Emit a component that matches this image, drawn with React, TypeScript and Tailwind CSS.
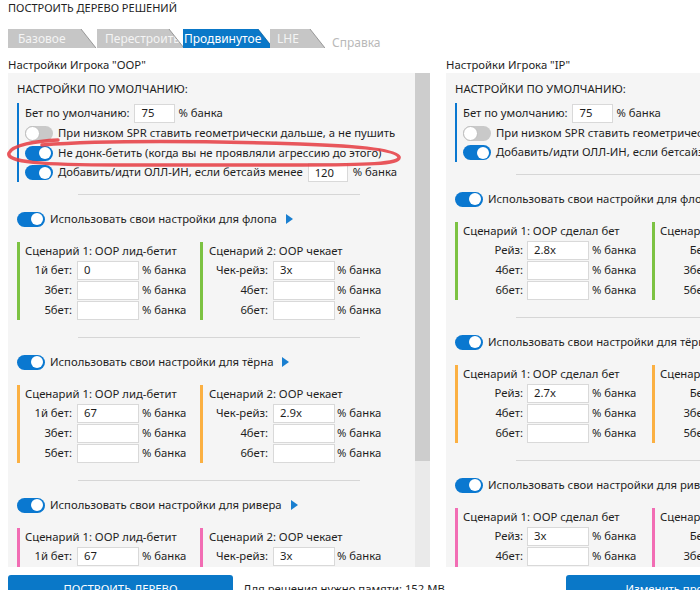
import React from 'react'

type Scn = { title: string; rows: [string, string][] }
type Section = { street: string; border: string; s1: Scn; s2: Scn }

type Layout = {
  c1: string
  l1: string
  i1: string
  p1: string
  l2: string
  i2: string
  p2: string
  h2: string
}

function Toggle({ on }: { on: boolean }) {
  if (on) {
    return (
      <span className="flex h-[15px] w-[28px] shrink-0 items-center justify-end rounded-full bg-[#0a78d0] pr-[2px]">
        <span className="h-[12px] w-[12px] rounded-full bg-white" />
      </span>
    )
  }
  return (
    <span className="flex h-[15px] w-[28px] shrink-0 items-center justify-start rounded-full bg-[#c9c9c9]">
      <span className="h-[15px] w-[15px] rounded-full border border-[#bdbdbd] bg-white" />
    </span>
  )
}

function Field({ value, w }: { value: string; w: string }) {
  return (
    <span className={`flex h-[19px] shrink-0 items-center border border-[#d9d9d9] bg-white pl-[6px] leading-none ${w}`}>
      {value}
    </span>
  )
}

function Arrow() {
  return (
    <svg width="7" height="10" viewBox="0 0 7 10" className="ml-[4px] shrink-0">
      <polygon points="0,0 7,5 0,10" fill="#1a7fd0" />
    </svg>
  )
}

function Tab({ label, active, w, pl, className = '' }: { label: string; active?: boolean; w: string; pl: string; className?: string }) {
  return (
    <div className={`relative h-[19px] shrink-0 ${w} ${className}`}>
      <div
        className={`flex h-full items-center [clip-path:polygon(0_0,calc(100%_-_15px)_0,100%_100%,0_100%)] ${pl} ${
          active ? 'bg-[#0a78c8] text-white' : 'bg-[#c6c6c6] text-[#f4f4f4]'
        }`}
      >
        {label}
      </div>
      <svg className="pointer-events-none absolute top-0 right-0" width="16" height="19" viewBox="0 0 16 19">
        <line x1="1" y1="0" x2="16" y2="19" stroke={active ? '#065a96' : '#7a7a7a'} strokeWidth="1" opacity="0.7" />
      </svg>
    </div>
  )
}

function Scenario({ s, w, border, lab, inp, pct, head }: { s: Scn; w: string; border: string; lab: string; inp: string; pct: string; head: string }) {
  return (
    <div className={`flex shrink-0 flex-col border-l-[3px] ${w} ${border}`}>
      <div className={`h-[18px] leading-[18px] whitespace-nowrap ${head}`}>{s.title}</div>
      {s.rows.map(([label, value]) => (
        <div key={label} className="flex h-5 items-center whitespace-nowrap">
          <span className={`shrink-0 text-right ${lab}`}>{label}</span>
          <span className={inp}>
            <Field value={value} w="w-[62px]" />
          </span>
          <span className={pct}>% банка</span>
        </div>
      ))}
    </div>
  )
}

function StreetBlock({ sec, first, lay }: { sec: Section; first: boolean; lay: Layout }) {
  return (
    <>
      <div className={`ml-[61px] h-px w-[282px] shrink-0 bg-[#d6d6d6] ${first ? 'mt-[12px]' : 'mt-[17px]'}`} />
      <div className="mt-[14px] flex h-5 shrink-0 items-center gap-[5px] whitespace-nowrap">
        <Toggle on />
        <span>Использовать свои настройки для {sec.street}</span>
        <Arrow />
      </div>
      <div className="mt-[13px] flex shrink-0">
        <Scenario s={sec.s1} w={lay.c1} border={sec.border} lab={lay.l1} inp={lay.i1} pct={lay.p1} head="pl-[5px]" />
        <Scenario s={sec.s2} w="w-[200px]" border={sec.border} lab={lay.l2} inp={lay.i2} pct={lay.p2} head={lay.h2} />
      </div>
    </>
  )
}

const green = 'border-[#7cc242]'
const orange = 'border-[#fbb042]'
const pink = 'border-[#f26db4]'

const oopSections: Section[] = [
  {
    street: 'флопа',
    border: green,
    s1: { title: 'Сценарий 1: OOP лид-бетит', rows: [['1й бет:', '0'], ['3бет:', ''], ['5бет:', '']] },
    s2: { title: 'Сценарий 2: OOP чекает', rows: [['Чек-рейз:', '3x'], ['4бет:', ''], ['6бет:', '']] },
  },
  {
    street: 'тёрна',
    border: orange,
    s1: { title: 'Сценарий 1: OOP лид-бетит', rows: [['1й бет:', '67'], ['3бет:', ''], ['5бет:', '']] },
    s2: { title: 'Сценарий 2: OOP чекает', rows: [['Чек-рейз:', '2.9x'], ['4бет:', ''], ['6бет:', '']] },
  },
  {
    street: 'ривера',
    border: pink,
    s1: { title: 'Сценарий 1: OOP лид-бетит', rows: [['1й бет:', '67'], ['3бет:', ''], ['5бет:', '']] },
    s2: { title: 'Сценарий 2: OOP чекает', rows: [['Чек-рейз:', '3x'], ['4бет:', ''], ['6бет:', '']] },
  },
]

const ipSections: Section[] = [
  {
    street: 'флопа',
    border: green,
    s1: { title: 'Сценарий 1: OOP сделал бет', rows: [['Рейз:', '2.8x'], ['4бет:', ''], ['6бет:', '']] },
    s2: { title: 'Сценарий 2: OOP чекает', rows: [['Бет:', '75'], ['3бет:', ''], ['5бет:', '']] },
  },
  {
    street: 'тёрна',
    border: orange,
    s1: { title: 'Сценарий 1: OOP сделал бет', rows: [['Рейз:', '2.7x'], ['4бет:', ''], ['6бет:', '']] },
    s2: { title: 'Сценарий 2: OOP чекает', rows: [['Бет:', '75'], ['3бет:', ''], ['5бет:', '']] },
  },
  {
    street: 'ривера',
    border: pink,
    s1: { title: 'Сценарий 1: OOP сделал бет', rows: [['Рейз:', '3x'], ['4бет:', ''], ['6бет:', '']] },
    s2: { title: 'Сценарий 2: OOP чекает', rows: [['Бет:', '75'], ['3бет:', ''], ['5бет:', '']] },
  },
]

const oopLayout: Layout = {
  c1: 'w-[183px]',
  l1: 'w-[52px]',
  i1: 'ml-[5px]',
  p1: 'ml-[3px]',
  l2: 'w-[65px]',
  i2: 'ml-[5px]',
  p2: 'ml-[2px]',
  h2: 'pl-[6px]',
}

const ipLayout: Layout = {
  c1: 'w-[197px]',
  l1: 'w-[65px]',
  i1: 'ml-[4px]',
  p1: 'ml-[3px]',
  l2: 'w-[56px]',
  i2: 'ml-[5px]',
  p2: 'ml-[3px]',
  h2: 'pl-[5px]',
}

function Panel({ ip }: { ip?: boolean }) {
  const sections = ip ? ipSections : oopSections
  const lay = ip ? ipLayout : oopLayout
  return (
    <div className={`flex h-[494px] shrink-0 flex-col overflow-hidden bg-[#f5f5f5] px-[9px] pt-2 whitespace-nowrap ${ip ? 'w-[440px]' : 'w-[407px]'}`}>
      <div className="h-4 shrink-0 leading-4">НАСТРОЙКИ ПО УМОЛЧАНИЮ:</div>
      <div className="mt-[6px] flex shrink-0 flex-col border-l-2 border-[#0a78d0] pl-[6px]">
        <div className="flex h-5 items-center">
          <span>Бет по умолчанию:</span>
          <span className="ml-[5px]">
            <Field value="75" w="w-[41px]" />
          </span>
          <span className="ml-[3px]">% банка</span>
        </div>
        <div className="flex h-5 items-center gap-[5px]">
          <Toggle on={false} />
          <span>При низком SPR ставить геометрически дальше, а не пушить</span>
        </div>
        {!ip && (
          <div className="flex h-5 items-center gap-[5px]">
            <Toggle on />
            <span>Не донк-бетить (когда вы не проявляли агрессию до этого)</span>
          </div>
        )}
        <div className="flex h-[19px] items-center gap-[5px]">
          <Toggle on />
          <span>Добавить/идти ОЛЛ-ИН, если бетсайз менее</span>
          <Field value="120" w="w-[40px]" />
          <span>% банка</span>
        </div>
      </div>
      {sections.map((sec, i) => (
        <StreetBlock key={sec.street} sec={sec} first={i === 0} lay={lay} />
      ))}
    </div>
  )
}

export default function App() {
  return (
    <div className="relative h-[590px] w-[700px] overflow-hidden bg-white font-['Noto_Sans',sans-serif] text-[11.3px] text-[#1e1e1e]">
      <div className="h-[29px] pl-2 text-[11px] leading-[15px]">ПОСТРОИТЬ ДЕРЕВО РЕШЕНИЙ</div>

      <div className="flex h-[19px] items-center pl-2 text-[12px]">
        <Tab label="Базовое" w="w-[88px]" pl="pl-[10px]" />
        <Tab label="Перестроить" w="w-[87px]" pl="pl-[8px]" className="ml-[1px]" />
        <Tab label="Продвинутое" active w="w-[90px]" pl="pl-[1px]" className="-ml-[1px]" />
        <Tab label="LHE" w="w-[55px]" pl="pl-[7px]" className="-ml-[3px]" />
        <span className="mt-[8px] ml-[7px] text-[#b9b9b9]">Справка</span>
      </div>

      <div className="flex">
        <div className="ml-2 flex w-[422px] shrink-0 flex-col">
          <div className="flex h-[25px] items-end leading-4">Настройки Игрока "OOP"</div>
          <div className="flex">
            <Panel />
            <div className="flex w-[15px] shrink-0 flex-col">
              <div className="h-[388px] bg-[#cdcdcd]" />
              <div className="flex-1 bg-[#eaeaea]" />
            </div>
          </div>
        </div>
        <div className="ml-4 flex shrink-0 flex-col">
          <div className="flex h-[25px] items-end leading-4">Настройки Игрока "IP"</div>
          <Panel ip />
        </div>
      </div>

      <div className="mt-2 flex items-start pl-2">
        <div className="flex h-[28px] w-[225px] shrink-0 items-center justify-center rounded-t-[3px] bg-[#0a78c8] text-white">
          ПОСТРОИТЬ ДЕРЕВО
        </div>
        <div className="ml-[10px] flex h-[28px] w-[323px] shrink-0 items-center whitespace-nowrap">
          Для решения нужно памяти: 152 MB
        </div>
        <div className="flex h-[28px] w-[225px] shrink-0 items-center justify-center rounded-t-[3px] bg-[#0a78c8] text-white">
          Изменить профиль
        </div>
      </div>

      <svg className="pointer-events-none absolute top-0 left-0" width="700" height="590" viewBox="0 0 700 590">
        <path
          d="M58 140 C 36 141, 12 145, 9 153 C 6 162, 40 165, 120 165 L 300 165 C 365 165, 401 164, 399 157 C 397 150, 360 146, 300 144 C 200 141, 110 140, 42 145"
          fill="none"
          stroke="#e53a40"
          strokeWidth="3.5"
          strokeLinecap="round"
          opacity="0.85"
        />
      </svg>
    </div>
  )
}
